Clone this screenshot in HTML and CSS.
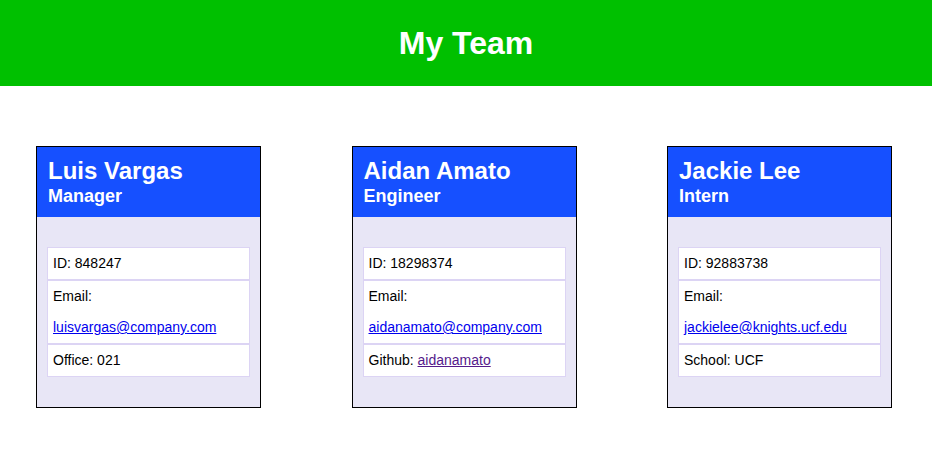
FILE: index.html
```html
<!DOCTYPE html>
<html lang="en">
<head>
<meta charset="utf-8">
<title>My Team</title>
<link rel="stylesheet" href="styles.css">
</head>
<body>
<header class="banner"><h1 class="banner-title">My Team</h1></header>
<main class="team">
  <section class="card">
    <div class="card-head">
      <h2 class="card-name">Luis Vargas</h2>
      <h3 class="card-role">Manager</h3>
    </div>
    <div class="card-body">
      <ul class="info">
        <li class="info-item">ID: 848247</li>
        <li class="info-item">Email: <a class="link" href="#">luisvargas@company.com</a></li>
        <li class="info-item">Office: 021</li>
      </ul>
    </div>
  </section>
  <section class="card">
    <div class="card-head">
      <h2 class="card-name">Aidan Amato</h2>
      <h3 class="card-role">Engineer</h3>
    </div>
    <div class="card-body">
      <ul class="info">
        <li class="info-item">ID: 18298374</li>
        <li class="info-item">Email: <a class="link" href="#">aidanamato@company.com</a></li>
        <li class="info-item">Github: <a class="link-visited" href="#">aidanamato</a></li>
      </ul>
    </div>
  </section>
  <section class="card">
    <div class="card-head">
      <h2 class="card-name">Jackie Lee</h2>
      <h3 class="card-role">Intern</h3>
    </div>
    <div class="card-body">
      <ul class="info">
        <li class="info-item">ID: 92883738</li>
        <li class="info-item">Email: <a class="link" href="#">jackielee@knights.ucf.edu</a></li>
        <li class="info-item">School: UCF</li>
      </ul>
    </div>
  </section>
</main>
</body>
</html>
```
FILE: styles.css
```css
body {
  margin: 0;
  font-family: "Liberation Sans", Arial, sans-serif;
  background: #ffffff;
  color: #000;
}
.banner {
  height: 86px;
  background: #00c000;
  display: flex;
  align-items: center;
  justify-content: center;
}
.banner-title {
  margin: 0;
  color: #fff;
  font-size: 32px;
  font-weight: bold;
  line-height: 1;
}
.team {
  display: flex;
  justify-content: space-between;
  padding: 60px 40px 0 36px;
}
.card {
  width: 223px;
  border: 1px solid #000;
  background: #e8e6f6;
}
.card-head {
  background: #1650ff;
  color: #fff;
  padding: 10px 11px;
  height: 50px;
}
.card-name {
  margin: 0;
  font-size: 24px;
  line-height: 28px;
  font-weight: bold;
}
.card-role {
  margin: 0;
  font-size: 18px;
  line-height: 22px;
  font-weight: bold;
}
.card-body {
  padding: 30px 10px;
}
.info {
  list-style: none;
  margin: 0;
  padding: 0;
}
.info-item {
  background: #fff;
  border: 1px solid #dcd4f4;
  padding: 7px 5px;
  font-size: 14px;
  line-height: 17px;
}
.link {
  display: block;
  margin-top: 14px;
  color: #0000ee;
}
.link-visited {
  color: #551a8b;
}
```
